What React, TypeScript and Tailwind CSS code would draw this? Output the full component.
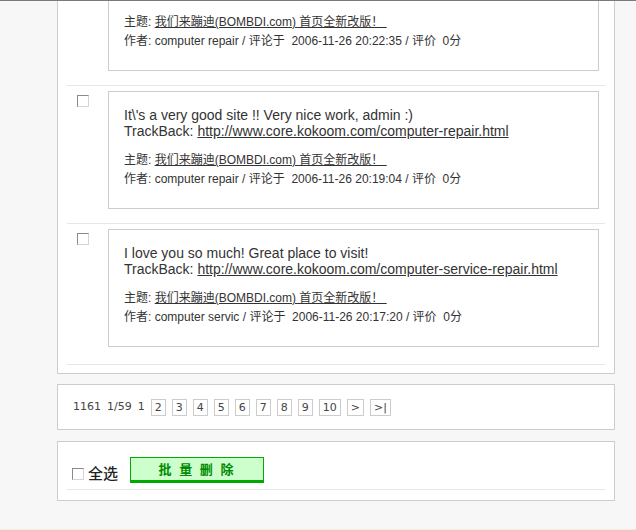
import React from 'react';

const comments = [
  {
    text: '',
    url: '',
    author: 'computer repair',
    time: '2006-11-26 20:22:35',
  },
  {
    text: "It\\'s a very good site !! Very nice work, admin :)",
    url: 'http://www.core.kokoom.com/computer-repair.html',
    author: 'computer repair',
    time: '2006-11-26 20:19:04',
  },
  {
    text: 'I love you so much! Great place to visit!',
    url: 'http://www.core.kokoom.com/computer-service-repair.html',
    author: 'computer servic',
    time: '2006-11-26 20:17:20',
  },
];

function Checkbox({ className = '' }: { className?: string }) {
  return (
    <span
      className={`block w-[12px] h-[12px] bg-white border border-t-[#8a8a8a] border-l-[#8a8a8a] border-b-[#d4d4d4] border-r-[#d4d4d4] ${className}`}
    />
  );
}

function CommentRow({ c }: { c: (typeof comments)[number] }) {
  return (
    <div className="flex border-t border-[#e6e6e6] pt-[5px] pb-[14px]">
      <div className="w-[41px] pl-[10px] pt-[4px] shrink-0">
        <Checkbox />
      </div>
      <div className="w-[491px] border border-[#cccccc] pt-[15px] pl-[15px] pb-[19px] text-[#333]">
        {/* the first row is scrolled past its comment text, keep the space only */}
        {c.text ? (
          <div className="text-[14px] leading-[16px]">
            <div>{c.text}</div>
            <div>
              TrackBack: <a className="underline text-[#333]">{c.url}</a>
            </div>
          </div>
        ) : (
          <div className="h-[30px]" />
        )}
        <div className="mt-[12px] text-[12px] leading-[19px]">
          <div>
            主题: <a className="underline text-[#333]">我们来蹦迪(BOMBDI.com) 首页全新改版！&nbsp;</a>
          </div>
          <div>
            作者: {c.author} / 评论于&nbsp; {c.time} / 评价&nbsp; 0分
          </div>
        </div>
      </div>
    </div>
  );
}

export default function App() {
  const pages = ['2', '3', '4', '5', '6', '7', '8', '9', '10', '>', '>|'];
  return (
    <div className="w-[636px] h-[530px] overflow-hidden bg-[#f7f7f7] border-t border-[#7a7a7a] font-['Liberation_Sans','Noto_Sans_CJK_SC',sans-serif]">
      <div className="overflow-hidden">
        <div className="-mt-[52px] ml-[57px] w-[558px] bg-white border-x border-b border-[#cccccc] px-[9px]">
          {comments.map((c, i) => (
            <CommentRow key={i} c={c} />
          ))}
          <div className="mt-[3px] border-t border-[#e6e6e6] h-[9px]" />
        </div>
      </div>

      <div className="mt-[10px] ml-[57px] w-[558px] h-[46px] bg-white border border-[#cccccc] flex items-center pl-[15px] gap-[6px] text-[11px] text-[#444] font-['DejaVu_Sans',sans-serif]">
        <span>1161</span>
        <span>1/59</span>
        <span>1</span>
        {pages.map((p) => (
          <span key={p} className="border border-[#cccccc] px-[3px] leading-[15px]">
            {p}
          </span>
        ))}
      </div>

      <div className="mt-[11px] ml-[57px] w-[558px] h-[60px] bg-white border border-[#cccccc] px-[9px] pt-[15px]">
        <div className="flex items-end pl-[5px]">
          <Checkbox className="mb-[3px]" />
          <span className="ml-[4px] text-[15px] leading-[18px] text-[#222] font-medium">全选</span>
          <button className="ml-[12px] w-[134px] h-[26px] bg-[#ccffcc] border border-b-[3px] border-[#00aa00] text-[#008a00] text-[13px] font-bold tracking-[2px] leading-none">
            批 量 删 除
          </button>
        </div>
        <div className="mt-[6px] border-t border-[#e6e6e6]" />
      </div>

      <div className="mt-[28px] h-px bg-[#f1edda]" />
    </div>
  );
}
